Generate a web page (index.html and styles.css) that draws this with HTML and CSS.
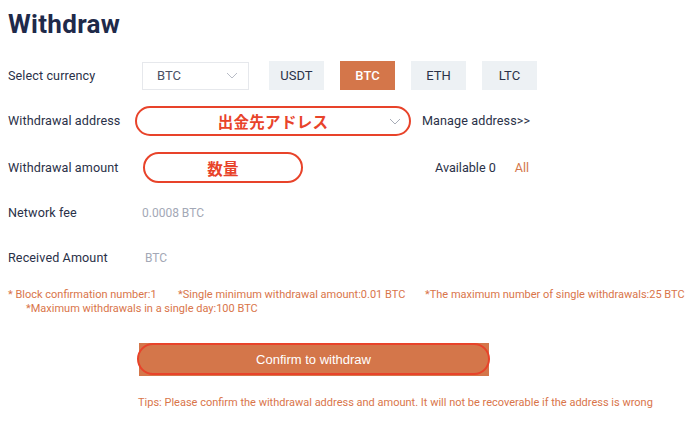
FILE: index.html
```html
<!DOCTYPE html>
<html>
<head>
<meta charset="utf-8">
<link rel="stylesheet" href="styles.css">
</head>
<body>
<div class="page">
  <h1 class="title">Withdraw</h1>
  <div class="row r1">
    <div class="label">Select currency</div>
    <div class="select">
      <span>BTC</span>
      <svg class="chev" width="12" height="7" viewBox="0 0 12 7"><path d="M1 1l5 5 5-5" fill="none" stroke="#b8bcc6" stroke-width="1"/></svg>
    </div>
    <div class="coins">
      <div class="coin">USDT</div>
      <div class="coin active">BTC</div>
      <div class="coin">ETH</div>
      <div class="coin">LTC</div>
    </div>
  </div>
  <div class="row r2">
    <div class="label">Withdrawal address</div>
    <div class="addr">
      <span class="anno">出金先アドレス</span>
      <svg class="chev addr-chev" width="12" height="7" viewBox="0 0 12 7"><path d="M1 1l5 5 5-5" fill="none" stroke="#a8adb8" stroke-width="1"/></svg>
    </div>
    <a class="manage">Manage address&gt;&gt;</a>
  </div>
  <div class="row r3">
    <div class="label">Withdrawal amount</div>
    <div class="amount"><span class="anno">数量</span></div>
    <div class="avail">Available 0</div>
    <a class="all">All</a>
  </div>
  <div class="row r4">
    <div class="label">Network fee</div>
    <div class="value">0.0008 BTC</div>
  </div>
  <div class="row r5">
    <div class="label">Received Amount</div>
    <div class="value v5">BTC</div>
  </div>
  <div class="notes">
    <div class="nline"><span class="n1">* Block confirmation number:1</span><span class="n2">*Single minimum withdrawal amount:0.01 BTC</span><span>*The maximum number of single withdrawals:25 BTC</span></div>
    <div class="nline second">*Maximum withdrawals in a single day:100 BTC</div>
  </div>
  <div class="btnwrap">
    <div class="btn">Confirm to withdraw</div>
  </div>
  <div class="tips">Tips: Please confirm the withdrawal address and amount. It will not be recoverable if the address is wrong</div>
</div>
</body>
</html>
```
FILE: styles.css
```css
* { box-sizing: border-box; }
html, body { margin: 0; padding: 0; background: #fff; }
body { font-family: Roboto, "Noto Sans", sans-serif; color: #2a3148; }
.page { width: 700px; height: 426px; padding: 8px 8px 0 8px; overflow: hidden; }
.title { margin: 0; font-size: 26px; line-height: 32px; font-weight: 700; color: #1f2a4a; letter-spacing: 0.3px; }
.row { display: flex; align-items: center; height: 45px; }
.r1 { margin-top: 13px; }
.r3 { margin-top: 2px; }
.label { width: 134px; flex: none; font-size: 12.6px; color: #2a3148; letter-spacing: 0.1px; }
.select { width: 107px; height: 28px; border: 1px solid #e6e8ec; display: flex; align-items: center; justify-content: space-between; padding: 0 10px 0 14px; font-size: 13px; color: #4a5064; }
.coins { display: flex; gap: 16px; margin-left: 20px; }
.coin { width: 55px; height: 29px; background: #edf1f4; display: flex; align-items: center; justify-content: center; font-size: 13px; color: #2a3148; }
.coin.active { background: #d4764a; color: #fff; font-weight: 500; }
.addr { margin-left: -7px; width: 276px; height: 30px; border: 2px solid #e8432a; border-radius: 15px; display: flex; align-items: center; justify-content: center; position: relative; }
.addr-chev { position: absolute; right: 8px; top: 10px; }
.anno { color: #e8432a; font-family: "Noto Sans CJK JP", sans-serif; font-weight: 700; font-size: 15.5px; letter-spacing: 0.3px; }
.manage { margin-left: 11px; font-size: 12.6px; color: #2a3148; letter-spacing: 0.1px; }
.amount { margin-left: 1px; width: 160px; height: 31px; border: 2px solid #e8432a; border-radius: 16px; display: flex; align-items: center; justify-content: center; }
.avail { margin-left: 132px; font-size: 12.6px; color: #2a3148; }
.all { margin-left: 19px; font-size: 12.6px; color: #d4764a; }
.value { font-size: 12px; color: #a3a8b6; }
.v5 { margin-left: 3px; }
.notes { margin-top: 8px; font-size: 11px; line-height: 14px; color: #d9754a; }
.nline { white-space: nowrap; }
.n1 { display: inline-block; width: 170px; }
.n2 { display: inline-block; width: 247px; }
.second { padding-left: 18px; }
.btnwrap { margin: 27px 0 0 131px; width: 350px; height: 33px; background: #d4764a; display: flex; }
.btn { margin: 0 -1px 0 -2px; flex: 1; height: 32px; border: 2px solid #e8432a; border-radius: 16px; background: #d4764a; color: #fff; font-family: "Liberation Sans", Arial, sans-serif; font-size: 13px; display: flex; align-items: center; justify-content: center; }
.tips { margin: 20px 0 0 130px; font-size: 11px; color: #d9754a; white-space: nowrap; }
```
